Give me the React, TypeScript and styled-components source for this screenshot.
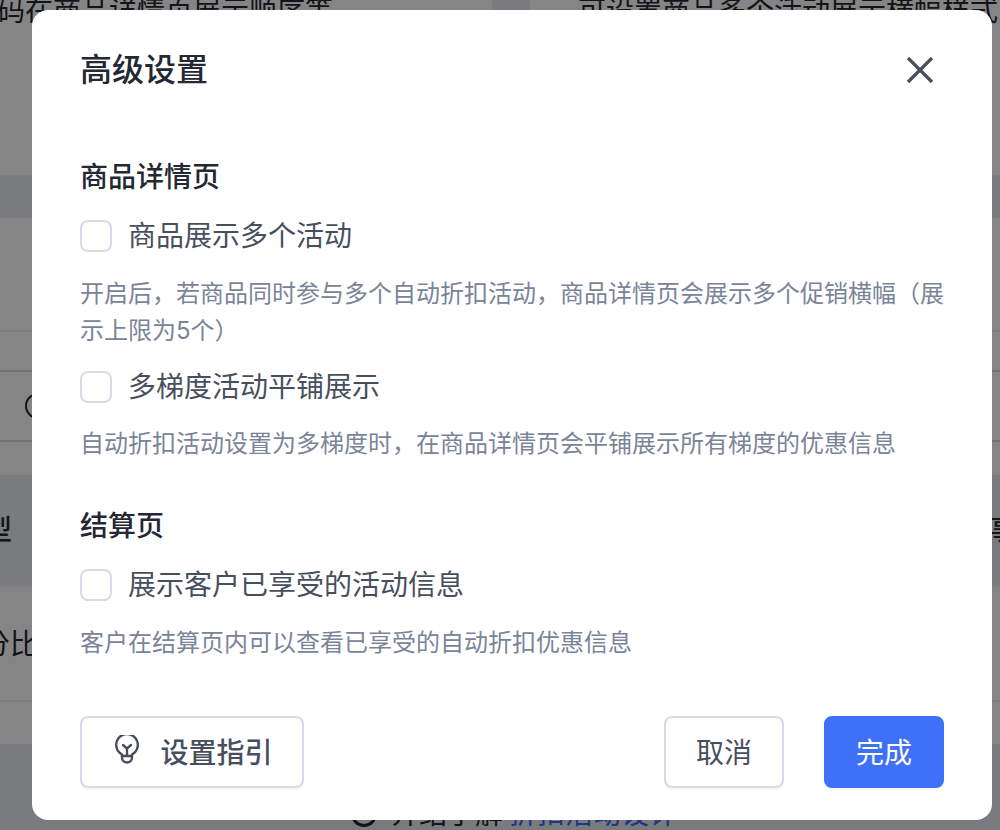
import React from "react";
import styled, { createGlobalStyle } from "styled-components";

const GlobalStyle = createGlobalStyle`
  html, body {
    margin: 0;
    padding: 0;
    height: 830px;
    overflow: hidden;
    background: #fff;
    font-family: Inter, "Noto Sans CJK SC", sans-serif;
  }
`;

/* page behind the dialog */
const Page = styled.div`
  width: 1000px;
  height: 830px;
  overflow: hidden;
  color: #242833;
  font-size: 28px;
  line-height: 40px;
`;

const TopCopy = styled.div`
  display: grid;
  grid-template-columns: 492px 38px 48px 1fr;
  height: 175px;
  white-space: nowrap;
  overflow: hidden;
`;

const CopyText = styled.div<{ $shift?: number }>`
  margin-top: -9px;
  margin-left: ${(p) => p.$shift ?? 0}px;
`;

const Gutter = styled.div`
  height: 40px;
  background: #e9ecf0;
`;

const Band = styled.div<{ $h: number; $tint?: boolean; $line?: string }>`
  height: ${(p) => p.$h}px;
  box-sizing: border-box;
  background: ${(p) => (p.$tint ? "#e9ecf0" : "#fff")};
  border-bottom: ${(p) => (p.$line ? `2px solid ${p.$line}` : "none")};
`;

const SearchRow = styled(Band)`
  display: flex;
  align-items: center;
  padding-left: 25px;
`;

const SearchCircle = styled.span`
  width: 22px;
  height: 22px;
  border: 2.5px solid #242833;
  border-radius: 50%;
`;

const TableHead = styled(Band)`
  display: flex;
  justify-content: space-between;
  align-items: center;
  font-weight: 500;
  white-space: nowrap;
  & > span:first-child {
    margin-left: -44px;
  }
  & > span:last-child {
    margin-right: -18px;
  }
`;

const TableRow = styled(Band)`
  display: flex;
  align-items: center;
  margin-left: -46px;
  white-space: nowrap;
`;

const FootNote = styled(Band)`
  display: flex;
  align-items: flex-end;
  padding-left: 351px;
  white-space: nowrap;
  & > div {
    display: flex;
    align-items: center;
    margin-bottom: -4px;
  }
`;

const HelpCircle = styled.span`
  width: 20px;
  height: 20px;
  margin-right: 14px;
  border: 3px solid #242833;
  border-radius: 50%;
`;

const DocLink = styled.span`
  color: #356dff;
  margin-left: 6px;
`;

/* dialog */
const Overlay = styled.div`
  position: fixed;
  inset: 0;
  background: rgba(0, 0, 0, 0.48);
  display: flex;
  align-items: center;
  padding-left: 32px;
`;

const Dialog = styled.div`
  width: 960px;
  height: 810px;
  box-sizing: border-box;
  padding: 36px 48px 32px;
  background: #fff;
  border-radius: 16px;
  display: flex;
  flex-direction: column;
`;

const Header = styled.div`
  display: flex;
  justify-content: space-between;
  align-items: center;
  height: 48px;
`;

const Title = styled.div`
  font-size: 32px;
  font-weight: 500;
  line-height: 48px;
  color: #242833;
`;

const CloseButton = styled.button`
  width: 32px;
  height: 32px;
  margin-right: 8px;
  padding: 0;
  border: 0;
  background: none;
  display: flex;
  align-items: center;
  justify-content: center;
`;

const Section = styled.section<{ $top: number }>`
  margin-top: ${(p) => p.$top}px;
`;

const SectionTitle = styled.div`
  font-size: 28px;
  font-weight: 500;
  line-height: 40px;
  color: #242833;
`;

const OptionRow = styled.label<{ $top: number }>`
  display: flex;
  align-items: center;
  gap: 16px;
  margin-top: ${(p) => p.$top}px;
  font-size: 28px;
  line-height: 40px;
  color: #474f5e;
`;

const CheckBox = styled.span`
  width: 32px;
  height: 32px;
  box-sizing: border-box;
  border: 2px solid #d7dbe7;
  border-radius: 8px;
  background: #fff;
`;

const Help = styled.div<{ $top: number }>`
  margin-top: ${(p) => p.$top}px;
  font-size: 24px;
  line-height: 37px;
  color: #7a8499;
`;

const Footer = styled.div`
  margin-top: auto;
  display: flex;
  align-items: center;
  gap: 40px;
`;

const Button = styled.button<{ $primary?: boolean }>`
  height: 72px;
  width: 120px;
  box-sizing: border-box;
  border-radius: 8px;
  border: 2px solid ${(p) => (p.$primary ? "#3f70f8" : "#d7dbe7")};
  background: ${(p) => (p.$primary ? "#3f70f8" : "#fff")};
  color: ${(p) => (p.$primary ? "#fff" : "#474f5e")};
  box-shadow: 0 2px 2px rgba(0, 0, 0, 0.04);
  font-family: inherit;
  font-size: 28px;
  padding: 0 0 2px;
`;

const GuideButton = styled(Button)`
  width: 224px;
  margin-right: auto;
  padding-left: 4px;
  font-weight: 500;
  display: flex;
  align-items: center;
  justify-content: center;
  gap: 21px;
  & > svg {
    margin-top: -3px;
  }
`;

const BulbIcon = () => (
  <svg width="24" height="29" viewBox="0 0 24 29" fill="none" stroke="#474f5e" strokeWidth="2.4" strokeLinejoin="round" strokeLinecap="round">
    <path d="M7 19.5A10.8 10.8 0 1 1 17 19.5V22.5A5 5 0 0 1 7 22.5Z" />
    <path d="M7 21H17" />
    <path d="M8 10L12 13.5L16 10M12 13.5V20" />
  </svg>
);

const CloseIcon = () => (
  <svg width="28" height="28" viewBox="0 0 28 28" fill="none" stroke="#474f5e" strokeWidth="3.2">
    <path d="M2 2L26 26M26 2L2 26" />
  </svg>
);

export default function App() {
  return (
    <>
      <GlobalStyle />
      <Page>
        <TopCopy>
          <CopyText $shift={-3}>码在商品详情页展示顺序等</CopyText>
          <Gutter />
          <span />
          <CopyText>可设置商品多个活动展示横幅样式</CopyText>
        </TopCopy>
        <Band $h={43} $tint />
        <Band $h={114} $line="#f0f1f3" />
        <Band $h={40} $line="#dcdce0" />
        <SearchRow $h={70} $line="#dcdce0">
          <SearchCircle />
        </SearchRow>
        <Band $h={33} />
        <TableHead $h={112} $tint $line="#f0f1f3">
          <span>类型</span>
          <span>事</span>
        </TableHead>
        <TableRow $h={115} $line="#f0f1f3">百分比</TableRow>
        <Band $h={42} />
        <FootNote $h={86} $tint>
          <div>
            <HelpCircle />
            介绍了解
            <DocLink>折扣活动设计</DocLink>
          </div>
        </FootNote>
      </Page>
      <Overlay>
        <Dialog>
          <Header>
            <Title>高级设置</Title>
            <CloseButton aria-label="关闭">
              <CloseIcon />
            </CloseButton>
          </Header>
          <Section $top={63}>
            <SectionTitle>商品详情页</SectionTitle>
            <OptionRow $top={19}>
              <CheckBox />
              商品展示多个活动
            </OptionRow>
            <Help $top={19}>开启后，若商品同时参与多个自动折扣活动，商品详情页会展示多个促销横幅（展示上限为5个）</Help>
            <OptionRow $top={18}>
              <CheckBox />
              多梯度活动平铺展示
            </OptionRow>
            <Help $top={18}>自动折扣活动设置为多梯度时，在商品详情页会平铺展示所有梯度的优惠信息</Help>
          </Section>
          <Section $top={44}>
            <SectionTitle>结算页</SectionTitle>
            <OptionRow $top={19}>
              <CheckBox />
              展示客户已享受的活动信息
            </OptionRow>
            <Help $top={19}>客户在结算页内可以查看已享受的自动折扣优惠信息</Help>
          </Section>
          <Footer>
            <GuideButton>
              <BulbIcon />
              设置指引
            </GuideButton>
            <Button>取消</Button>
            <Button $primary>完成</Button>
          </Footer>
        </Dialog>
      </Overlay>
    </>
  );
}
